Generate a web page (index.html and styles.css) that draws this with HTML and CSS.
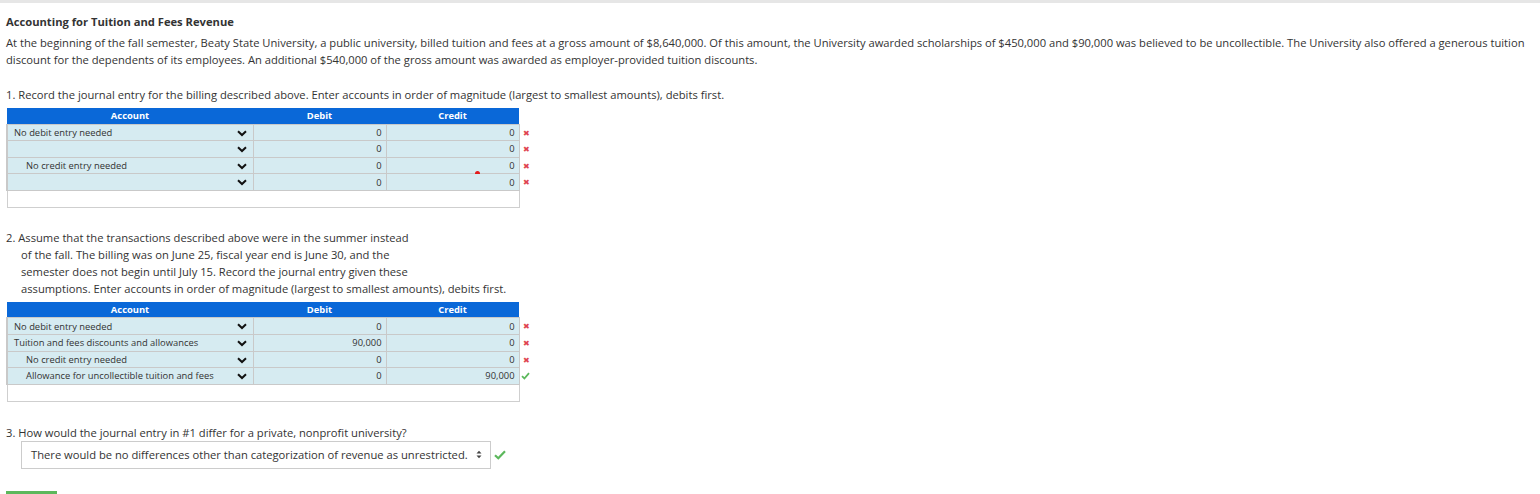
FILE: index.html
```html
<!DOCTYPE html>
<html>
<head>
<meta charset="utf-8">
<link rel="stylesheet" href="styles.css">
</head>
<body>
<div class="topbar"></div>
<div class="page">
  <h1 class="title">Accounting for Tuition and Fees Revenue</h1>
  <p class="intro">At the beginning of the fall semester, Beaty State University, a public university, billed tuition and fees at a gross amount of $8,640,000. Of this amount, the University awarded scholarships of $450,000 and $90,000 was believed to be uncollectible. The University also offered a generous tuition discount for the dependents of its employees. An additional $540,000 of the gross amount was awarded as employer-provided tuition discounts.</p>

  <p class="q q1">1. Record the journal entry for the billing described above. Enter accounts in order of magnitude (largest to smallest amounts), debits first.</p>

  <div class="jwrap">
    <table class="journal">
      <thead>
        <tr><th class="c-acc">Account</th><th class="c-num">Debit</th><th class="c-num">Credit</th></tr>
      </thead>
      <tbody>
        <tr><td class="acc"><span class="acctxt">No debit entry needed</span><span class="chev"><svg width="10" height="7" viewBox="0 0 10 7"><path d="M1 1.2 L5 5 L9 1.2" fill="none" stroke="#111" stroke-width="2"/></svg></span></td><td class="num">0</td><td class="num">0<span class="mark bad">✖</span></td></tr>
        <tr><td class="acc"><span class="acctxt"></span><span class="chev"><svg width="10" height="7" viewBox="0 0 10 7"><path d="M1 1.2 L5 5 L9 1.2" fill="none" stroke="#111" stroke-width="2"/></svg></span></td><td class="num">0</td><td class="num">0<span class="mark bad">✖</span></td></tr>
        <tr><td class="acc ind"><span class="acctxt">No credit entry needed</span><span class="chev"><svg width="10" height="7" viewBox="0 0 10 7"><path d="M1 1.2 L5 5 L9 1.2" fill="none" stroke="#111" stroke-width="2"/></svg></span></td><td class="num">0</td><td class="num">0<span class="mark bad">✖</span><span class="dot"></span></td></tr>
        <tr><td class="acc ind"><span class="acctxt"></span><span class="chev"><svg width="10" height="7" viewBox="0 0 10 7"><path d="M1 1.2 L5 5 L9 1.2" fill="none" stroke="#111" stroke-width="2"/></svg></span></td><td class="num">0</td><td class="num">0<span class="mark bad">✖</span></td></tr>
        <tr class="blank"><td colspan="3"></td></tr>
      </tbody>
    </table>
  </div>

  <p class="q q2">2. Assume that the transactions described above were in the summer instead<br>of the fall. The billing was on June 25, fiscal year end is June 30, and the<br>semester does not begin until July 15. Record the journal entry given these<br>assumptions. Enter accounts in order of magnitude (largest to smallest amounts), debits first.</p>

  <div class="jwrap">
    <table class="journal">
      <thead>
        <tr><th class="c-acc">Account</th><th class="c-num">Debit</th><th class="c-num">Credit</th></tr>
      </thead>
      <tbody>
        <tr><td class="acc"><span class="acctxt">No debit entry needed</span><span class="chev"><svg width="10" height="7" viewBox="0 0 10 7"><path d="M1 1.2 L5 5 L9 1.2" fill="none" stroke="#111" stroke-width="2"/></svg></span></td><td class="num">0</td><td class="num">0<span class="mark bad">✖</span></td></tr>
        <tr><td class="acc"><span class="acctxt">Tuition and fees discounts and allowances</span><span class="chev"><svg width="10" height="7" viewBox="0 0 10 7"><path d="M1 1.2 L5 5 L9 1.2" fill="none" stroke="#111" stroke-width="2"/></svg></span></td><td class="num">90,000</td><td class="num">0<span class="mark bad">✖</span></td></tr>
        <tr><td class="acc ind"><span class="acctxt">No credit entry needed</span><span class="chev"><svg width="10" height="7" viewBox="0 0 10 7"><path d="M1 1.2 L5 5 L9 1.2" fill="none" stroke="#111" stroke-width="2"/></svg></span></td><td class="num">0</td><td class="num">0<span class="mark bad">✖</span></td></tr>
        <tr><td class="acc ind"><span class="acctxt">Allowance for uncollectible tuition and fees</span><span class="chev"><svg width="10" height="7" viewBox="0 0 10 7"><path d="M1 1.2 L5 5 L9 1.2" fill="none" stroke="#111" stroke-width="2"/></svg></span></td><td class="num">0</td><td class="num">90,000<span class="mark good"><svg width="9" height="8" viewBox="0 0 9 8"><path d="M1 4.2 L3.4 6.5 L8 1.2" fill="none" stroke="#5cb85c" stroke-width="1.8"/></svg></span></td></tr>
        <tr class="blank"><td colspan="3"></td></tr>
      </tbody>
    </table>
  </div>

  <p class="q q3">3. How would the journal entry in #1 differ for a private, nonprofit university?</p>
  <div class="answer">
    <div class="select">There would be no differences other than categorization of revenue as unrestricted.<span class="updown"><svg width="6" height="9" viewBox="0 0 6 9"><path d="M0.5 3.6 L3 0.8 L5.5 3.6 Z M0.5 5.4 L3 8.2 L5.5 5.4 Z" fill="#444"/></svg></span></div>
    <span class="bigcheck"><svg width="12" height="10" viewBox="0 0 12 10"><path d="M1 5.2 L4.3 8.3 L11 1.3" fill="none" stroke="#5cb85c" stroke-width="2.2"/></svg></span>
  </div>
  <div class="greenbtn"></div>
</div>
</body>
</html>
```

FILE: styles.css
```css
* { box-sizing: border-box; }
html, body { margin: 0; padding: 0; background: #fff; }
body {
  font-family: "Open Sans", "Liberation Sans", sans-serif;
  color: #333;
  overflow: hidden;
  height: 494px;
}
.topbar {
  height: 3px;
  background: #e6e6e6;
}
.page {
  padding: 0 6px;
}
.title {
  margin: 10px 0 0;
  font-size: 11.2px;
  font-weight: 700;
  line-height: 17px;
  color: #333;
}
.intro {
  margin: 4px 0 0;
  font-size: 11.2px;
  line-height: 17px;
}
.q {
  margin: 0;
  font-size: 11.2px;
  line-height: 17px;
}
.q1 { margin-top: 18px; }
.q2 {
  margin-top: 21px;
  padding-left: 15px;
  text-indent: -15px;
}
.q3 { margin-top: 22px; }

.jwrap {
  margin-top: 5px;
  width: 510px;
  position: relative;
}
.journal {
  width: 510px;
  border-collapse: collapse;
  table-layout: fixed;
  font-size: 9.4px;
}
.journal th {
  background: #0a68d8;
  color: #fff;
  font-weight: 700;
  height: 16px;
  padding: 0;
  line-height: 15px;
  text-align: center;
}
.c-acc { width: 246px; }
.c-num { width: 133px; }
.journal td {
  background: #d6ebf1;
  border: 1px solid #c9c9c9;
  height: 16.6px;
  padding: 0 4px 0 6px;
  line-height: 15px;
  color: #333;
  white-space: nowrap;
}
.journal td.acc {
  border-left: 2px solid #c9c9c9;
}
.acc {
  position: relative;
}
.acc .acctxt { display: inline-block; }
.acc.ind { padding-left: 18px; }
.chev {
  position: absolute;
  right: 6px;
  top: 5px;
  display: flex;
}
.num {
  text-align: right;
  position: relative;
}
.mark {
  position: absolute;
  right: -11px;
  top: 0;
  font-size: 8px;
  line-height: 16px;
}
.mark.bad { color: #e0454f; }
.mark.good { top: 4px; line-height: 0; }
.dot {
  position: absolute;
  left: 88px;
  bottom: -3px;
  width: 5px;
  height: 5px;
  border-radius: 50%;
  background: #e31b1b;
}
.journal tr.blank td {
  background: #fff;
  height: 17px;
  border: 1px solid #cfcfcf;
}

.answer {
  display: flex;
  align-items: center;
  margin-top: 0;
  padding-left: 15px;
}
.select {
  width: 470px;
  height: 28px;
  border: 1px solid #cccccc;
  display: flex;
  align-items: center;
  padding-left: 9px;
  font-size: 11.2px;
  color: #333;
  white-space: nowrap;
}
.updown {
  margin-left: 8px;
  display: flex;
}
.bigcheck {
  margin-left: 3px;
  display: flex;
}
.greenbtn {
  margin-top: 22px;
  width: 51px;
  height: 6px;
  background: #5cb85c;
}
```
